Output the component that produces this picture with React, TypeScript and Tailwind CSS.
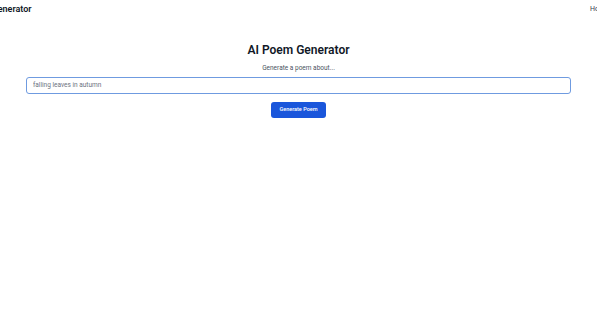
import React from "react";

export default function App() {
  return (
    <div className="min-h-[320px] w-full overflow-hidden bg-white text-[#111827]" style={{ fontFamily: 'Roboto, "Noto Sans", sans-serif' }}>
      <header className="flex h-[18px] justify-center overflow-hidden">
        <div className="flex w-[687px] shrink-0 items-center justify-between">
          <span className="text-[9px] font-semibold leading-none">AI Poem Generator</span>
          <nav className="flex w-[52px] gap-3 text-[7px] leading-none text-[#374151]">
            <span>Home</span>
          </nav>
        </div>
      </header>
      <main className="flex flex-col items-center px-[26px] pt-[26px]">
        <h1 className="text-[12px] font-semibold leading-none">AI Poem Generator</h1>
        <p className="mt-[9px] text-[6.5px] leading-none text-[#4b5563]">Generate a poem about...</p>
        <input
          autoFocus
          className="mt-[5px] h-[17px] w-full rounded-[3px] border border-[#6f9be0] px-[6px] text-[6.5px] outline-none placeholder:text-[#6b7280]"
          placeholder="falling leaves in autumn"
        />
        <button className="mt-[8px] h-[16px] w-[55px] rounded-[3px] bg-[#1a56db] text-[5.5px] font-medium leading-none text-white">
          Generate Poem
        </button>
      </main>
    </div>
  );
}
